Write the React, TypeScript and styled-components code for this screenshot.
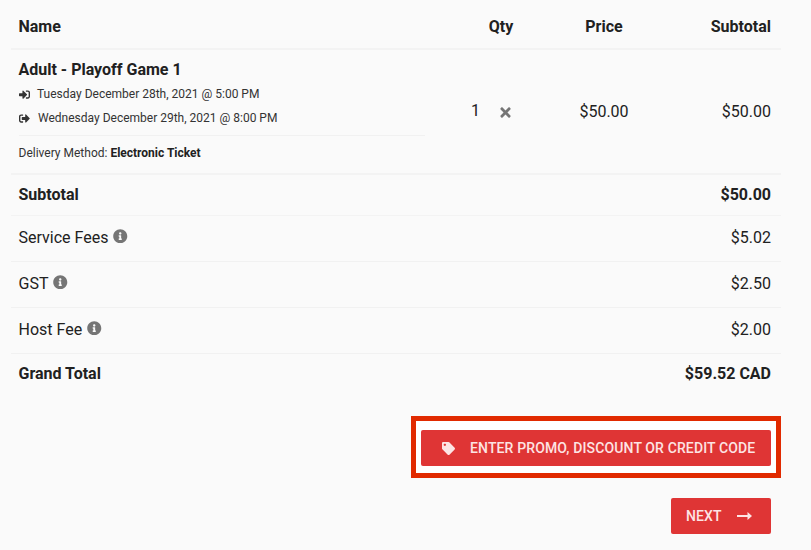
import React from "react";
import styled, { createGlobalStyle } from "styled-components";
import { FaInfoCircle, FaSignInAlt, FaSignOutAlt, FaTag, FaTimes } from "react-icons/fa";

const Global = createGlobalStyle`
  html, body { margin: 0; padding: 0; background: #fafafa; }
  *, *::before, *::after { box-sizing: border-box; }
  body { font-family: Roboto, "Liberation Sans", sans-serif; color: #212121; width: 811px; height: 550px; overflow: hidden; }
`;

const Page = styled.div`
  display: flex;
  flex-direction: column;
  padding: 0 30px 0 11px;
`;

const HeaderRow = styled.div`
  display: grid;
  grid-template-columns: 422px 136px 70px 142px;
  align-items: center;
  height: 50px;
  padding-top: 5px;
  border-bottom: 2px solid #f3f3f3;
  font-size: 16px;
  font-weight: 700;
  line-height: 20px;
`;

const NameHead = styled.div`
  padding-left: 7.5px;
`;

const CenterCell = styled.div`
  text-align: center;
`;

const RightCell = styled.div`
  text-align: right;
  padding-right: 10px;
`;

const ItemRow = styled.div`
  display: grid;
  grid-template-columns: 422px 136px 70px 142px;
  align-items: center;
  height: 125px;
  border-bottom: 2px solid #f3f3f3;
  font-size: 16px;
`;

const ItemInfo = styled.div`
  display: flex;
  flex-direction: column;
  padding: 0 8px 0 7.5px;
  height: 100%;
`;

const ItemTitle = styled.div`
  font-size: 16px;
  font-weight: 700;
  line-height: 20px;
  margin-top: 10px;
  margin-bottom: 2px;
`;

const DateLine = styled.div<{ $gap: number }>`
  display: flex;
  align-items: center;
  height: 24px;
  font-size: 12px;
  color: #333;
  svg {
    width: 11px;
    height: 11px;
    margin-right: ${(p) => p.$gap}px;
    flex: none;
  }
`;

const Delivery = styled.div`
  border-top: 1px solid #f1f1f1;
  margin-top: 5px;
  padding-top: 9px;
  font-size: 12px;
  line-height: 16px;
  color: #333;
  b {
    font-weight: 700;
    color: #212121;
  }
`;

const QtyCell = styled.div`
  display: flex;
  align-items: center;
  padding-left: 38px;
  gap: 20px;
  span {
    margin-top: -2px;
  }
  svg {
    width: 15px;
    height: 15px;
    color: #757575;
    margin-top: 2px;
    margin-left: -2.5px;
  }
`;

const SummaryRow = styled.div<{ $h: number; $bold?: boolean }>`
  display: flex;
  justify-content: space-between;
  align-items: center;
  height: ${(p) => p.$h}px;
  padding: 0 10px 2px 7.5px;
  border-bottom: 1px solid ${(p) => (p.$bold ? "#f3f3f3" : "#f1f1f1")};
  font-size: 16px;
  font-weight: ${(p) => (p.$bold ? 700 : 400)};
`;

const LastRow = styled(SummaryRow)`
  border-bottom: none;
  padding-bottom: 0;
`;

const Label = styled.span`
  display: inline-flex;
  align-items: center;
  gap: 5px;
  svg {
    width: 14.5px;
    height: 14.5px;
    color: #757575;
    margin-top: -3px;
  }
`;

const Actions = styled.div`
  display: flex;
  flex-direction: column;
  align-items: flex-end;
  margin-top: 24px;
`;

const Highlight = styled.div`
  border: 5px solid #e12a00;
  background: #fff;
  padding: 9px 5px 7px 5px;
  display: flex;
  height: 62px;
`;

const RedButton = styled.button`
  display: flex;
  align-items: center;
  height: 36px;
  border: none;
  border-radius: 2px;
  background: #df3535;
  color: #fde4e4;
  font-family: inherit;
  font-size: 14px;
  font-weight: 500;
  letter-spacing: 0.13px;
  white-space: nowrap;
  padding: 0;
`;

const PromoButton = styled(RedButton)`
  width: 350px;
  padding-left: 21px;
  svg {
    width: 13px;
    height: 13px;
    margin-right: 15px;
  }
`;

const NextButton = styled(RedButton)`
  width: 100px;
  padding-left: 15px;
  margin-top: 20px;
  margin-right: 10px;
`;

const ArrowIcon = styled.svg`
  width: 15px;
  height: 10px;
  margin-left: 15px;
`;

export default function App() {
  return (
    <Page>
      <Global />
      <HeaderRow>
        <NameHead>Name</NameHead>
        <CenterCell>Qty</CenterCell>
        <CenterCell>Price</CenterCell>
        <RightCell>Subtotal</RightCell>
      </HeaderRow>
      <ItemRow>
        <ItemInfo>
          <ItemTitle>Adult - Playoff Game 1</ItemTitle>
          <DateLine $gap={7.5}><FaSignInAlt />Tuesday December 28th, 2021 @ 5:00 PM</DateLine>
          <DateLine $gap={8.5}><FaSignOutAlt />Wednesday December 29th, 2021 @ 8:00 PM</DateLine>
          <Delivery>Delivery Method: <b>Electronic Ticket</b></Delivery>
        </ItemInfo>
        <QtyCell><span>1</span><FaTimes /></QtyCell>
        <CenterCell>$50.00</CenterCell>
        <RightCell>$50.00</RightCell>
      </ItemRow>
      <SummaryRow $h={41} $bold><span>Subtotal</span><span>$50.00</span></SummaryRow>
      <SummaryRow $h={46}><Label>Service Fees<FaInfoCircle /></Label><span>$5.02</span></SummaryRow>
      <SummaryRow $h={46}><Label>GST<FaInfoCircle /></Label><span>$2.50</span></SummaryRow>
      <SummaryRow $h={46}><Label>Host Fee<FaInfoCircle /></Label><span>$2.00</span></SummaryRow>
      <LastRow $h={38} $bold><span>Grand Total</span><span>$59.52 CAD</span></LastRow>
      <Actions>
        <Highlight>
          <PromoButton><FaTag />ENTER PROMO, DISCOUNT OR CREDIT CODE</PromoButton>
        </Highlight>
        <NextButton>
          NEXT
          <ArrowIcon viewBox="0 0 15 10" fill="currentColor">
            <path d="M0 4h10.500V1L15 5l-4.500 4V6H0z" />
          </ArrowIcon>
        </NextButton>
      </Actions>
    </Page>
  );
}
